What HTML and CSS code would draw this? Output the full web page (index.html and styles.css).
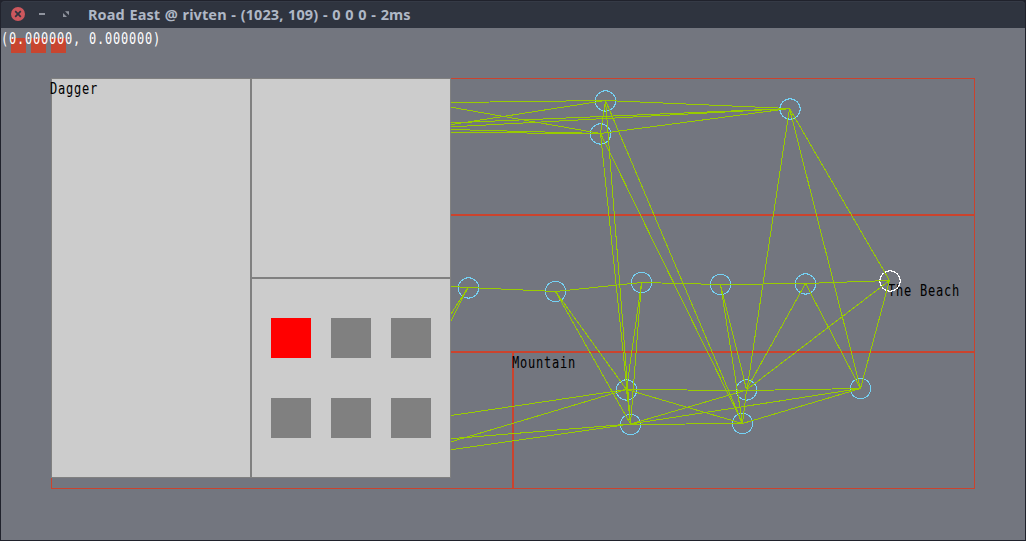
FILE: index.html
```html
<!DOCTYPE html>
<html lang="en">
<head>
<meta charset="utf-8">
<title>Road East @ rivten</title>
<link rel="stylesheet" href="styles.css">
</head>
<body>
<div class="window">
  <header class="titlebar">
    <svg class="controls" width="72" height="27" viewBox="0 0 72 27">
      <circle class="close" cx="18" cy="13" r="7"/>
      <path class="cross" d="M15.2 10.2l5.6 5.6M20.8 10.2l-5.6 5.6"/>
      <path class="minimize" d="M39 13h6"/>
      <path class="maximize" d="M65 10.2h4v4zM63 12v4h4z"/>
    </svg>
    <h1 class="title">Road East @ rivten - (1023, 109) - 0 0 0 - 2ms</h1>
  </header>
  <main class="viewport">
    <div class="hearts"><i class="heart"></i><i class="heart"></i><i class="heart"></i></div>
    <div class="coords pixel">(0.000000, 0.000000)</div>
    <div class="world">
      <section class="region wide"></section>
      <section class="region wide"></section>
      <section class="region"></section>
      <section class="region"><span class="pixel region-name">Mountain</span></section>
    </div>
    <svg class="graph" width="1024" height="512" viewBox="1 28 1024 512">
      <text class="place" transform="translate(888 296) scale(1 1.37)">The Beach</text>
      <g class="nodes">
        <circle cx="605.5" cy="101" r="10.2"/><circle cx="600.5" cy="134" r="10.2"/>
        <circle cx="790" cy="109" r="10.2"/><circle cx="468.5" cy="288" r="10.2"/>
        <circle cx="555.5" cy="291.5" r="10.2"/><circle cx="641.5" cy="282.5" r="10.2"/>
        <circle cx="720.5" cy="284.5" r="10.2"/><circle cx="805.5" cy="284" r="10.2"/>
        <circle cx="626.5" cy="390" r="10.2"/><circle cx="630.5" cy="424.5" r="10.2"/>
        <circle cx="746.5" cy="390" r="10.2"/><circle cx="742.5" cy="423.5" r="10.2"/>
        <circle cx="860.5" cy="388.5" r="10.2"/>
        <circle class="current" cx="890" cy="281" r="10.2"/>
      </g>
      <path class="roads" d="M451 102.5L605.5 100.5M451 107.2L600.5 133.5M451 124.6L605.5 100.5M451 122.9L789.5 108.5M451 126.9L789.5 108.5M451 129.5L600.5 133.5M451 132.5L600.5 133.5
        M605.5 100.5L789.5 108.5L600.5 133.5L605.5 100.5L630.5 424L600.5 133.5L742.5 423.5L605.5 100.5
        M789.5 108.5L747 389.5M789.5 108.5L860.5 388.5M789.5 108.5L889.5 280.5
        M451 286.5L468 287.5L555.5 291.5L641.5 282.5L720.5 284.5L805.5 283.5L889.5 280.5
        M451 314L468 287.5L451 321
        M555.5 291.5L626.5 389.5L641.5 282.5L630.5 424L555.5 291.5
        M720.5 284.5L746.5 389.5M720.5 284.5L742.5 423.5M805.5 283.5L746.5 389.5M805.5 283.5L860.5 388.5
        M889.5 280.5L747 389.5M889.5 280.5L860.5 388.5
        M451 415.5L626.5 389.5L451 441.8M451 438.7L630.5 424L451 449.8
        M626.5 389.5L630.5 424M626.5 389.5L746.5 390.5L742.5 423.5L626.5 389.5
        M746.5 390.5L860.5 388.5
        M630.5 424.5L742.5 423.5L860.5 388.5L630.5 424L746.5 390"/>
    </svg>
    <div class="inventory">
      <section class="cell details"><span class="pixel item-name">Dagger</span></section>
      <section class="cell"></section>
      <section class="cell slots">
        <i class="slot selected"></i><i class="slot"></i><i class="slot"></i>
        <i class="slot"></i><i class="slot"></i><i class="slot"></i>
      </section>
    </div>
  </main>
</div>
</body>
</html>
```
FILE: styles.css
```css
* { box-sizing: border-box; }
body { margin: 0; background: #20222c; overflow: hidden; }
.window { width: 1026px; height: 541px; padding: 1px; }
.titlebar {
  display: flex;
  align-items: center;
  height: 27px;
  background: #2f343f;
  border-radius: 4px 4px 0 0;
  box-shadow: inset 0 1px #353a46;
}
.controls { flex: none; margin-left: -1px; }
.close { fill: #cc575d; }
.cross { fill: none; stroke: #2f343f; stroke-width: 1.7; }
.minimize { stroke: #90949e; stroke-width: 2; }
.maximize { fill: #90949e; }
.title {
  margin: 0 0 1px 16px;
  font: 700 14.5px/20px "Noto Sans", "Open Sans", sans-serif;
  letter-spacing: 0.1px;
  word-spacing: 0.75px;
  white-space: pre;
  color: #afb8c6;
}
.viewport { position: relative; height: 512px; padding: 10px 50px 51px; background: #73767f; overflow: hidden; }
.hearts { display: flex; gap: 5px; height: 15px; margin-left: -40px; }
.heart { width: 15px; background: #c8452f; }
.pixel {
  display: block;
  width: max-content;
  font: 12px/16px "DejaVu Sans Mono", monospace;
  letter-spacing: 0.776px;
  white-space: pre;
  transform: scaleY(1.37);
}
.coords { position: absolute; left: 0; top: 3px; color: #fff; }
.world {
  display: grid;
  grid-template: repeat(3, 137px) / 1fr 1fr;
  width: 924px;
  margin-top: 25px;
}
.region { border: 1px solid #cb432d; }
.region.wide { grid-column: 1 / -1; }
.region-name { margin: 2px 0 0 -2px; color: #000; }
.graph { position: absolute; inset: 0; shape-rendering: crispEdges; }
.place { font: 12px "DejaVu Sans Mono", monospace; letter-spacing: 0.776px; fill: #000; }
.nodes { fill: none; stroke: #75d2f5; stroke-width: 1; }
.nodes .current { stroke: #fff; }
.roads { fill: none; stroke: #99cc00; stroke-width: 1; stroke-linejoin: bevel; }
.inventory {
  position: absolute;
  left: 50px;
  top: 50px;
  display: grid;
  grid-template: 200px 200px / 200px 200px;
}
.cell { background: #ccc; border: 1px solid #808080; }
.details { grid-row: 1 / 3; }
.item-name { margin: 2px 0 0 -2px; color: #000; }
.slots { display: grid; grid-template: 40px 40px / repeat(3, 40px); gap: 40px 20px; padding: 39px 19px; }
.slot { background: #808080; }
.slot.selected { background: #f00; }
```
